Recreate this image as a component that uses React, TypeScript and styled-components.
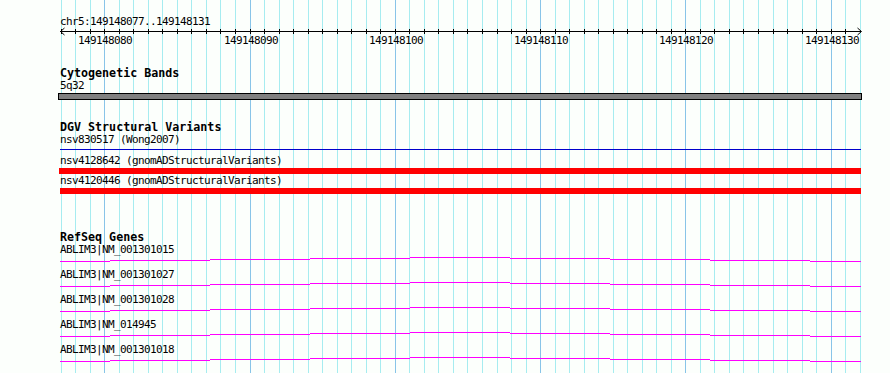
import styled, {createGlobalStyle} from 'styled-components';

const GlobalStyle = createGlobalStyle`
  html, body {
    margin: 0;
    padding: 0;
    background: #fcfffc;
  }
`;

const START = 149148077;
const END = 149148132;
const PX_LEFT = 60.7;
const PX_PER_BP = 14.527;
const MONO = '"DejaVu Sans Mono", "Liberation Mono", monospace';

const bpToX = (bp: number) => Math.round(PX_LEFT + (bp - START) * PX_PER_BP);

const bases: number[] = [];
for (let bp = START; bp <= END; bp++) bases.push(bp);

const Panel = styled.div`
  position: relative;
  width: 890px;
  height: 373px;
  overflow: hidden;
  background: #fcfffc;
  color: #000;
`;

const Grid = styled.svg`
  position: absolute;
  inset: 0;
  z-index: 0;
`;

const Tracks = styled.div`
  position: relative;
  z-index: 1;
`;

const RulerSvg = styled.svg`
  display: block;
  font-family: ${MONO};
  font-size: 11px;
  letter-spacing: -0.62px;
`;

const Track = styled.section<{$gap: number}>`
  margin-top: ${props => props.$gap}px;
  padding-left: 60px;
`;

const TrackTitle = styled.div<{$height?: number}>`
  height: ${props => props.$height ?? 12}px;
  font-family: ${MONO};
  font-weight: bold;
  font-size: 11.67px;
  line-height: ${props => props.$height ?? 12}px;
  white-space: nowrap;
`;

const FeatureLabel = styled.div<{$gap?: number}>`
  height: 13px;
  margin-top: ${props => props.$gap ?? 0}px;
  font-family: ${MONO};
  font-size: 11px;
  letter-spacing: -0.62px;
  line-height: 13px;
  white-space: nowrap;
`;

const BandBar = styled.div`
  margin: 1px 0 0 -2px;
  width: 802px;
  height: 5px;
  background: #808080;
  border: 1px solid #000;
`;

const VariantBar = styled.div<{$color: string; $height: number; $left: number; $gap: number}>`
  margin-top: ${props => props.$gap}px;
  margin-left: ${props => props.$left}px;
  width: ${props => 801 - props.$left}px;
  height: ${props => props.$height}px;
  background: ${props => props.$color};
`;

const GeneRow = styled.div`
  height: 25px;
`;

const GeneLine = styled.svg`
  display: block;
  margin-top: 1px;
`;

const steps = [50, 150, 250, 350, 450, 550, 650, 750, 801];
const levels = [4, 3, 2, 1, 0, 1, 2, 3, 4];
const genePath = steps
  .map((x, i) => `M${i === 0 ? 0 : steps[i - 1]} ${levels[i] + 0.5}H${x}`)
  .join('');

const genes = [
  'ABLIM3|NM_001301015',
  'ABLIM3|NM_001301027',
  'ABLIM3|NM_001301028',
  'ABLIM3|NM_014945',
  'ABLIM3|NM_001301018',
];

const Ruler = () => {
  const left = 60;
  const right = 861;
  return (
    <RulerSvg width={890} height={48}>
      <text x={left} y={25}>
        chr5:149148077..149148131
      </text>
      <line x1={left} y1={31.5} x2={right} y2={31.5} stroke="#000" />
      <polyline points="64.5,28 60.5,31.5 64.5,35" fill="none" stroke="#000" />
      <polyline points="857.5,28 861.5,31.5 857.5,35" fill="none" stroke="#000" />
      {bases.slice(0, -1).map(bp => (
        <line key={bp} x1={bpToX(bp) + 0.5} y1={29} x2={bpToX(bp) + 0.5} y2={34} stroke="#000" />
      ))}
      {bases
        .filter(bp => bp % 10 === 0)
        .map(bp => (
          <text key={bp} x={bpToX(bp) - 26} y={44}>
            {bp}
          </text>
        ))}
    </RulerSvg>
  );
};

const App = () => {
  return (
    <>
      <GlobalStyle />
      <Panel>
        <Grid width={890} height={373}>
          {bases.map(bp => (
            <rect
              key={bp}
              x={bpToX(bp)}
              y={0}
              width={1}
              height={373}
              fill={bp % 10 === 0 ? '#88c4e8' : '#a6ecf0'}
            />
          ))}
        </Grid>
        <Tracks>
          <Ruler />
          <Track $gap={19}>
            <TrackTitle>Cytogenetic Bands</TrackTitle>
            <FeatureLabel>5q32</FeatureLabel>
            <BandBar />
          </Track>
          <Track $gap={21}>
            <TrackTitle>DGV Structural Variants</TrackTitle>
            <FeatureLabel>nsv830517 (Wong2007)</FeatureLabel>
            <VariantBar $color="#0000cc" $height={1} $left={0} $gap={3} />
            <FeatureLabel $gap={4}>nsv4128642 (gnomADStructuralVariants)</FeatureLabel>
            <VariantBar $color="#ff0000" $height={6} $left={-1} $gap={1} />
            <FeatureLabel>nsv4120446 (gnomADStructuralVariants)</FeatureLabel>
            <VariantBar $color="#ff0000" $height={6} $left={0} $gap={1} />
          </Track>
          <Track $gap={38}>
            <TrackTitle $height={11}>RefSeq Genes</TrackTitle>
            {genes.map(name => (
              <GeneRow key={name}>
                <FeatureLabel>{name}</FeatureLabel>
                <GeneLine width={801} height={5}>
                  <path d={genePath} fill="none" stroke="#ff00ff" />
                </GeneLine>
              </GeneRow>
            ))}
          </Track>
        </Tracks>
      </Panel>
    </>
  );
};

export default App;
